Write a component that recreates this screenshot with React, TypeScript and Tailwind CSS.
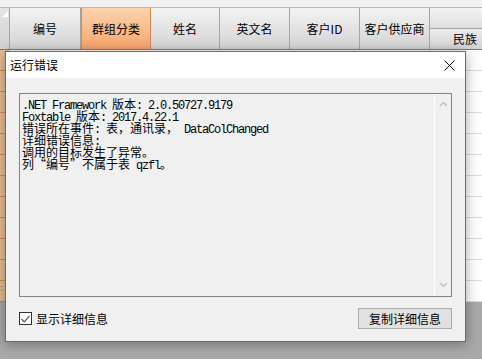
import React from 'react';

const cjk = "font-['Noto_Sans_CJK_SC',sans-serif]";

// ASCII runs in a mono face, CJK runs in the CJK face (like SimSun's half/full widths)
const Mixed: React.FC<{ text: string }> = ({ text }) => {
  const parts = text.match(/[\x20-\x7e]+|[“”]|[^\x20-\x7e“”]+/g) ?? [];
  return (
    <>
      {parts.map((p, i) => {
        if (/^[\x20-\x7e]/.test(p))
          return (
            <span key={i} className="font-['Liberation_Mono',monospace] text-[12px] leading-[12px] tracking-[-1.2px]">
              {p}
            </span>
          );
        if (p === '“' || p === '”')
          return (
            <span
              key={i}
              className={`inline-block w-[12px] ${p === '“' ? 'text-right' : 'text-left'} ${cjk} text-[12px] leading-[12px]`}
            >
              {p}
            </span>
          );
        return (
          <span key={i} className={`${cjk} text-[12px] leading-[12px]`}>
            {p}
          </span>
        );
      })}
    </>
  );
};

const headers = [
  { label: '编号', w: 'w-[71px]' },
  { label: '群组分类', w: 'w-[70px]', active: true },
  { label: '姓名', w: 'w-[69px]' },
  { label: '英文名', w: 'w-[70px]' },
  { label: '客户ID', w: 'w-[70px]' },
  { label: '客户供应商', w: 'w-[70px]' },
];

const lines = [
  '.NET Framework 版本: 2.0.50727.9179',
  'Foxtable 版本: 2017.4.22.1',
  '错误所在事件: 表，通讯录， DataColChanged',
  '详细错误信息:',
  '调用的目标发生了异常。',
  '列“编号”不属于表 qzfl。',
];

const rows = Array.from({ length: 12 });

export default function App() {
  return (
    <div className="relative w-[482px] h-[359px] overflow-hidden flex flex-col bg-[#a9a9a9]">
      <div className="h-[8px] bg-[#f0f0f0] border-b border-[#b9b9b9] shrink-0" />

      {/* column headers */}
      <div className="flex h-[42px] shrink-0 border-b border-[#7c7c7c] overflow-hidden">
        <div className="relative w-[10px] shrink-0 border-r border-[#a5a5a5] bg-linear-to-b from-[#e4e4e4] to-[#d2d2d2]">
          <div className="absolute right-[1px] top-[3px] w-0 h-0 border-l-[6px] border-l-transparent border-b-[6px] border-b-white" />
        </div>
        {headers.map((h) => (
          <div
            key={h.label}
            className={`${h.w} shrink-0 flex items-center justify-center text-[12px] text-black ${cjk} ${
              h.active
                ? 'bg-linear-to-b from-[#fdd3ad] to-[#f6a46c] border-x border-[#e0874a]'
                : 'bg-linear-to-b from-[#f3f3f3] to-[#d3d3d3] border-r border-[#a5a5a5]'
            }`}
          >
            {h.label}
          </div>
        ))}
        <div className="w-[70px] shrink-0 flex flex-col">
          <div className="h-[21px] border-b border-[#a5a5a5] bg-linear-to-b from-[#f3f3f3] to-[#e0e0e0]" />
          <div className={`flex-1 flex items-center justify-center text-[12px] text-black ${cjk} bg-linear-to-b from-[#ececec] to-[#d3d3d3]`}>
            民族
          </div>
        </div>
      </div>

      {/* data rows */}
      <div className="flex flex-col shrink-0">
        {rows.map((_, i) => (
          <div key={i} className="flex h-[21px]">
            <div className="w-[10px] border-b border-[#d4894c] bg-[#e9bb8d] relative">
              {i === 11 && <span className="absolute left-0 top-[2px] text-[9px] leading-none text-[#3a6fd8]">:</span>}
            </div>
            <div className="flex-1 bg-white border-b border-[#dcdcdc]" />
          </div>
        ))}
      </div>
      <div className="flex-1 bg-[#a9a9a9]" />

      {/* error dialog */}
      <div className="absolute left-[5px] top-[51px] w-[461px] h-[291px] border border-[#6c6c6c] flex flex-col bg-[#f0f0f0] shadow-[0_2px_12px_rgba(0,0,0,0.35)]">
        <div className="h-[26px] bg-white flex items-center justify-between pl-[4px] shrink-0">
          <span className={`${cjk} text-[12px] text-black`}>运行错误</span>
          <div className="w-[32px] h-[26px] flex items-center justify-center">
            <svg width="11" height="11" viewBox="0 0 11 11">
              <path d="M0.5 0.5 L10.5 10.5 M10.5 0.5 L0.5 10.5" stroke="#111" strokeWidth="1" />
            </svg>
          </div>
        </div>

        <div className="flex-1 flex flex-col px-[13px] pt-[15px]">
          <div className="h-[204px] border border-[#838383] flex">
            <div className="flex-1 pl-[2px] pt-[3px] text-black">
              {lines.map((l) => (
                <div key={l} className="h-[12px] leading-[12px] whitespace-pre">
                  <Mixed text={l} />
                </div>
              ))}
            </div>
            <div className="w-[17px] border-l border-white flex flex-col items-center justify-between pt-[7px] pb-[8px]">
              <svg width="9" height="6" viewBox="0 0 9 6">
                <path d="M1 5 L4.5 1.5 L8 5" fill="none" stroke="#c2c2c2" strokeWidth="1.5" />
              </svg>
              <svg width="9" height="6" viewBox="0 0 9 6">
                <path d="M1 1 L4.5 4.5 L8 1" fill="none" stroke="#c2c2c2" strokeWidth="1.5" />
              </svg>
            </div>
          </div>

          <div className="mt-[11px] h-[21px] flex items-center justify-between">
            <label className="flex items-center gap-[4px]">
              <span className="w-[13px] h-[13px] border border-[#333] bg-white flex items-center justify-center">
                <svg width="9" height="8" viewBox="0 0 9 8">
                  <path d="M0.5 4 L3.2 6.8 L8.5 0.8" fill="none" stroke="#555" strokeWidth="1.2" />
                </svg>
              </span>
              <span className={`${cjk} text-[12px] text-black`}>显示详细信息</span>
            </label>
            <button className={`w-[94px] h-[21px] border border-[#adadad] bg-[#e1e1e1] ${cjk} text-[12px] text-black flex items-center justify-center`}>
              复制详细信息
            </button>
          </div>
        </div>
      </div>
    </div>
  );
}
